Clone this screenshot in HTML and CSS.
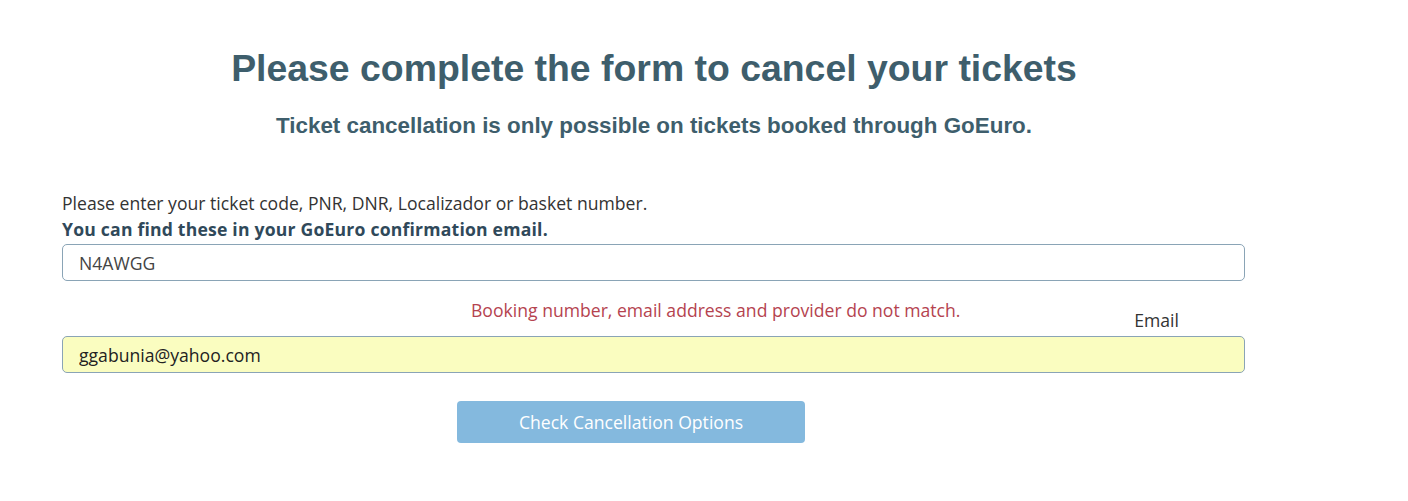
FILE: index.html
```html
<!DOCTYPE html>
<html>
<head>
<meta charset="utf-8">
<link rel="stylesheet" href="styles.css">
</head>
<body>
<div class="page">
  <h1 class="title">Please complete the form to cancel your tickets</h1>
  <h2 class="subtitle">Ticket cancellation is only possible on tickets booked through GoEuro.</h2>
  <form class="form">
    <p class="hint">Please enter your ticket code, PNR, DNR, Localizador or basket number.</p>
    <p class="hint strong">You can find these in your GoEuro confirmation email.</p>
    <input class="field first" type="text" value="N4AWGG">
    <div class="msg-row">
      <span class="error">Booking number, email address and provider do not match.</span>
      <label class="email-label">Email</label>
    </div>
    <input class="field autofill" type="text" value="ggabunia@yahoo.com">
    <div class="actions">
      <button class="btn" type="button">Check Cancellation Options</button>
    </div>
  </form>
</div>
</body>
</html>
```
FILE: styles.css
```css
html, body {
  margin: 0;
  padding: 0;
  background: #ffffff;
}
.page {
  width: 1292px;
  margin-left: 8px;
  padding-top: 1px;
}
.title {
  font-family: "Liberation Sans", Arial, sans-serif;
  font-weight: bold;
  font-size: 37.4px;
  line-height: 43px;
  color: #3e5e6c;
  text-align: center;
  margin: 46px 0 0 0;
}
.subtitle {
  font-family: "Liberation Sans", Arial, sans-serif;
  font-weight: bold;
  font-size: 22.4px;
  line-height: 26px;
  color: #3e5e6c;
  text-align: center;
  margin: 23px 0 0 0;
}
.form {
  margin: 51px 55px 0 54px;
  font-family: "Open Sans", sans-serif;
}
.hint {
  margin: 0;
  font-size: 17.6px;
  line-height: 26px;
  color: #333333;
}
.hint.strong {
  font-weight: 700;
  letter-spacing: 0.2px;
  color: #30495a;
}
.field {
  display: block;
  box-sizing: border-box;
  width: 100%;
  height: 37px;
  margin: 0;
  padding: 0 16px;
  border: 1px solid #8aa4b6;
  border-radius: 5px;
  background: #ffffff;
  font-family: "Open Sans", sans-serif;
  font-size: 17.6px;
  color: #444444;
  outline: none;
}
.field.first {
  margin-top: 2px;
}
.field.autofill {
  background: #fafdc0;
  color: #222222;
}
.msg-row {
  display: flex;
  align-items: flex-start;
  height: 55px;
  font-size: 17.6px;
}
.error {
  margin: 17px 0 0 409px;
  line-height: 24px;
  color: #b5434f;
}
.email-label {
  margin: 27px 66px 0 auto;
  line-height: 24px;
  color: #333333;
}
.actions {
  padding: 28px 0 0 395px;
}
.btn {
  display: block;
  width: 348px;
  height: 42px;
  border: none;
  border-radius: 4px;
  background: #84b9de;
  color: #ffffff;
  font-family: "Open Sans", sans-serif;
  font-size: 17.6px;
  cursor: pointer;
}
```
